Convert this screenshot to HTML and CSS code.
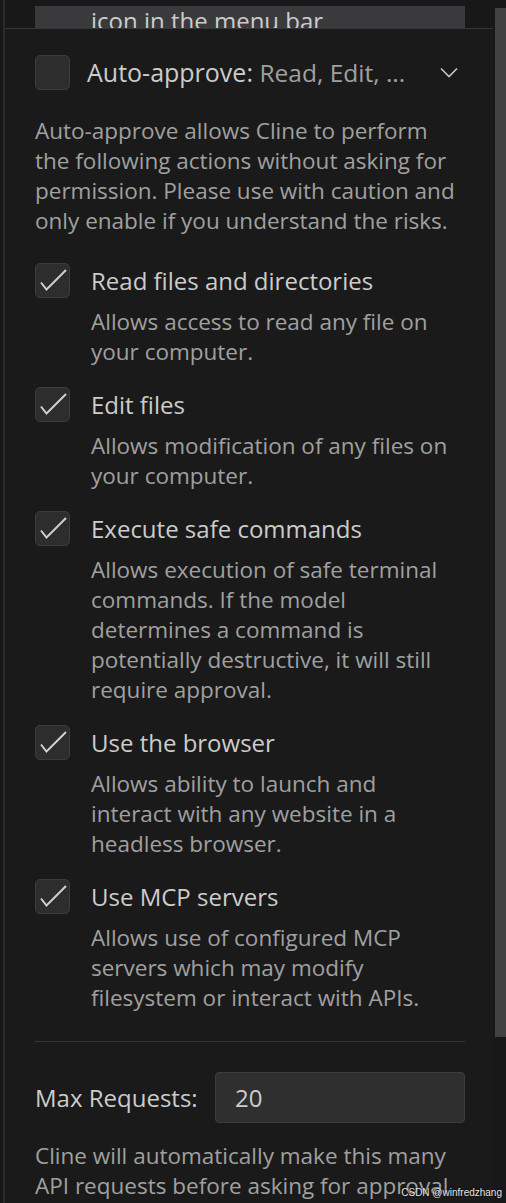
FILE: index.html
```html
<!DOCTYPE html>
<html>
<head>
<meta charset="utf-8">
<link rel="stylesheet" href="styles.css">
</head>
<body>
<div class="page">
  <div class="main">
    <div class="topstrip">
      <div class="prevbox"><span class="prevtext">icon in the menu bar</span></div>
    </div>
    <div class="panel">
      <div class="header">
        <span class="cb"></span>
        <span class="htitle">Auto-approve: <span class="hsub">Read, Edit, ...</span></span>
        <svg class="chev" width="18" height="11" viewBox="0 0 18 11"><path d="M1 1.5 L9 9.5 L17 1.5" fill="none" stroke="#c5c5c5" stroke-width="1.6"/></svg>
      </div>
      <p class="intro">Auto-approve allows Cline to perform<br>the following actions without asking for<br>permission. Please use with caution and<br>only enable if you understand the risks.</p>

      <div class="items">
        <div class="item">
          <span class="cb checked"><svg width="35" height="35" viewBox="0 0 35 35"><path d="M6 19.5 L11.5 26.5 L31 7" fill="none" stroke="#d0d0d0" stroke-width="2"/></svg></span>
          <div class="itext">
            <div class="ititle">Read files and directories</div>
            <div class="idesc">Allows access to read any file on<br>your computer.</div>
          </div>
        </div>
        <div class="item">
          <span class="cb checked"><svg width="35" height="35" viewBox="0 0 35 35"><path d="M6 19.5 L11.5 26.5 L31 7" fill="none" stroke="#d0d0d0" stroke-width="2"/></svg></span>
          <div class="itext">
            <div class="ititle">Edit files</div>
            <div class="idesc">Allows modification of any files on<br>your computer.</div>
          </div>
        </div>
        <div class="item">
          <span class="cb checked"><svg width="35" height="35" viewBox="0 0 35 35"><path d="M6 19.5 L11.5 26.5 L31 7" fill="none" stroke="#d0d0d0" stroke-width="2"/></svg></span>
          <div class="itext">
            <div class="ititle">Execute safe commands</div>
            <div class="idesc">Allows execution of safe terminal<br>commands. If the model<br>determines a command is<br>potentially destructive, it will still<br>require approval.</div>
          </div>
        </div>
        <div class="item">
          <span class="cb checked"><svg width="35" height="35" viewBox="0 0 35 35"><path d="M6 19.5 L11.5 26.5 L31 7" fill="none" stroke="#d0d0d0" stroke-width="2"/></svg></span>
          <div class="itext">
            <div class="ititle">Use the browser</div>
            <div class="idesc">Allows ability to launch and<br>interact with any website in a<br>headless browser.</div>
          </div>
        </div>
        <div class="item">
          <span class="cb checked"><svg width="35" height="35" viewBox="0 0 35 35"><path d="M6 19.5 L11.5 26.5 L31 7" fill="none" stroke="#d0d0d0" stroke-width="2"/></svg></span>
          <div class="itext">
            <div class="ititle">Use MCP servers</div>
            <div class="idesc">Allows use of configured MCP<br>servers which may modify<br>filesystem or interact with APIs.</div>
          </div>
        </div>
      </div>

      <div class="divider"></div>

      <div class="maxrow">
        <span class="maxlabel">Max Requests:</span>
        <div class="maxinput">20</div>
      </div>
      <p class="maxdesc">Cline will automatically make this many<br>API requests before asking for approval<br>to proceed with the task.</p>
    </div>
  </div>
  <div class="scrollbar"></div>
</div>
<div class="watermark">CSDN @winfredzhang</div>
</body>
</html>
```

FILE: styles.css
```css
html, body {
  margin: 0;
  padding: 0;
}
body {
  background: #181818;
  width: 506px;
  height: 1203px;
  overflow: hidden;
  font-family: "Segoe UI", "Open Sans", "Noto Sans", sans-serif;
  position: relative;
}
.page {
  display: flex;
  height: 1203px;
}
.main {
  width: 488px;
  margin-left: 3px;
  border-left: 2px solid #2b2b2b;
  display: flex;
  flex-direction: column;
}
.scrollbar {
  flex: none;
  width: 11px;
  margin-left: 2px;
  margin-top: 8px;
  height: 1029px;
  background: #424242;
}
.topstrip {
  flex: none;
  height: 28px;
  overflow: hidden;
  padding-left: 30px;
  padding-top: 8px;
  box-sizing: border-box;
}
.prevbox {
  width: 430px;
  height: 30px;
  background: #3a3a3d;
  padding-left: 56px;
  box-sizing: border-box;
}
.prevtext {
  display: block;
  color: #cccccc;
  font-size: 24px;
  line-height: 30px;
  margin-top: -2px;
}
.panel {
  flex: none;
  border-top: 1px solid #353535;
  background: #1a1a1a;
  padding: 26px 28px 0 30px;
}
.header {
  display: flex;
  align-items: center;
  height: 35px;
}
.cb {
  width: 35px;
  height: 35px;
  box-sizing: border-box;
  border: 1px solid #3c3c3c;
  border-radius: 5px;
  background: #2d2d2d;
  flex: none;
  display: block;
  overflow: hidden;
}
.cb svg {
  display: block;
  margin: -1px;
}
.htitle {
  margin-left: 17px;
  color: #cccccc;
  font-size: 25px;
  line-height: 35px;
  flex: 1;
  white-space: nowrap;
}
.hsub {
  color: #a0a0a0;
  font-size: 24.5px;
}
.chev {
  margin-right: 7px;
  display: block;
}
.intro {
  margin: 26px 0 0 0;
  color: #a0a0a0;
  font-size: 22.5px;
  line-height: 30px;
  white-space: nowrap;
}
.items {
  margin-top: 27px;
  display: flex;
  flex-direction: column;
  gap: 20px;
}
.item {
  display: flex;
  gap: 21px;
}
.itext {
  flex: 1;
}
.ititle {
  color: #cccccc;
  font-size: 24px;
  line-height: 35px;
}
.idesc {
  margin-top: 9px;
  color: #a0a0a0;
  font-size: 22.5px;
  line-height: 30px;
  white-space: nowrap;
}
.divider {
  margin-top: 28px;
  height: 1px;
  background: #353535;
}
.maxrow {
  margin-top: 30px;
  display: flex;
  align-items: center;
  gap: 16px;
}
.maxlabel {
  color: #cccccc;
  font-size: 24px;
  width: 164px;
  white-space: nowrap;
}
.maxinput {
  flex: 1;
  height: 51px;
  box-sizing: border-box;
  background: #2f2f2f;
  border: 1px solid #3c3c3c;
  border-radius: 4px;
  color: #cccccc;
  font-size: 24px;
  line-height: 49px;
  padding-left: 19px;
}
.maxdesc {
  margin: 18px 0 0 0;
  color: #a0a0a0;
  font-size: 22.5px;
  line-height: 30px;
  white-space: nowrap;
}
.watermark {
  position: absolute;
  right: 4px;
  bottom: 5px;
  font-size: 10px;
  color: #e6e6e6;
  font-family: "Liberation Sans", sans-serif;
  text-shadow: 0 0 2px #000;
}
```
